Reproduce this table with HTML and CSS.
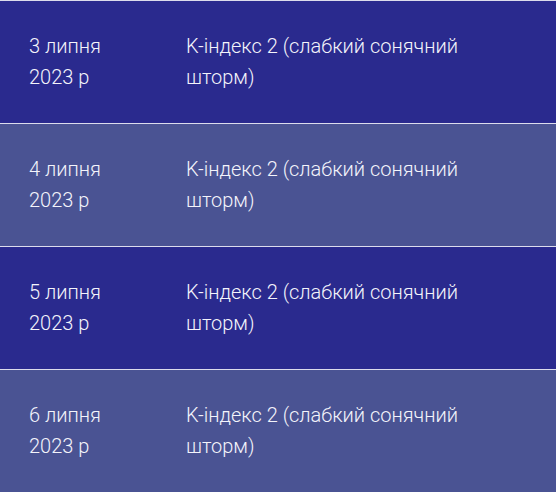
FILE: index.html
```html
<!DOCTYPE html>
<html lang="uk">
<head>
<meta charset="utf-8">
<link rel="stylesheet" href="styles.css">
</head>
<body>
<div class="list">
  <div class="row dark">
    <div class="date">3 липня 2023 р</div>
    <div class="desc">K-індекс 2 (слабкий сонячний шторм)</div>
  </div>
  <div class="row light">
    <div class="date">4 липня 2023 р</div>
    <div class="desc">K-індекс 2 (слабкий сонячний шторм)</div>
  </div>
  <div class="row dark">
    <div class="date">5 липня 2023 р</div>
    <div class="desc">K-індекс 2 (слабкий сонячний шторм)</div>
  </div>
  <div class="row light">
    <div class="date">6 липня 2023 р</div>
    <div class="desc">K-індекс 2 (слабкий сонячний шторм)</div>
  </div>
</div>
</body>
</html>
```

FILE: styles.css
```css
html, body {
  margin: 0;
  padding: 0;
  background: #2a2a8e;
}
.list {
  display: flex;
  flex-direction: column;
  font-family: Roboto, "Noto Sans", sans-serif;
  font-size: 20px;
  font-weight: 300;
  line-height: 31px;
  color: #f4f4fb;
}
.row {
  display: grid;
  grid-template-columns: 157px 1fr;
  height: 122px;
  align-items: center;
  border-top: 1px solid #dcdcec;
}
.dark { background: #2a2a8e; }
.light { background: #4a5393; }
.date {
  padding-left: 29px;
  width: 100px;
}
.desc {
  padding-left: 29px;
  width: 320px;
}
```
